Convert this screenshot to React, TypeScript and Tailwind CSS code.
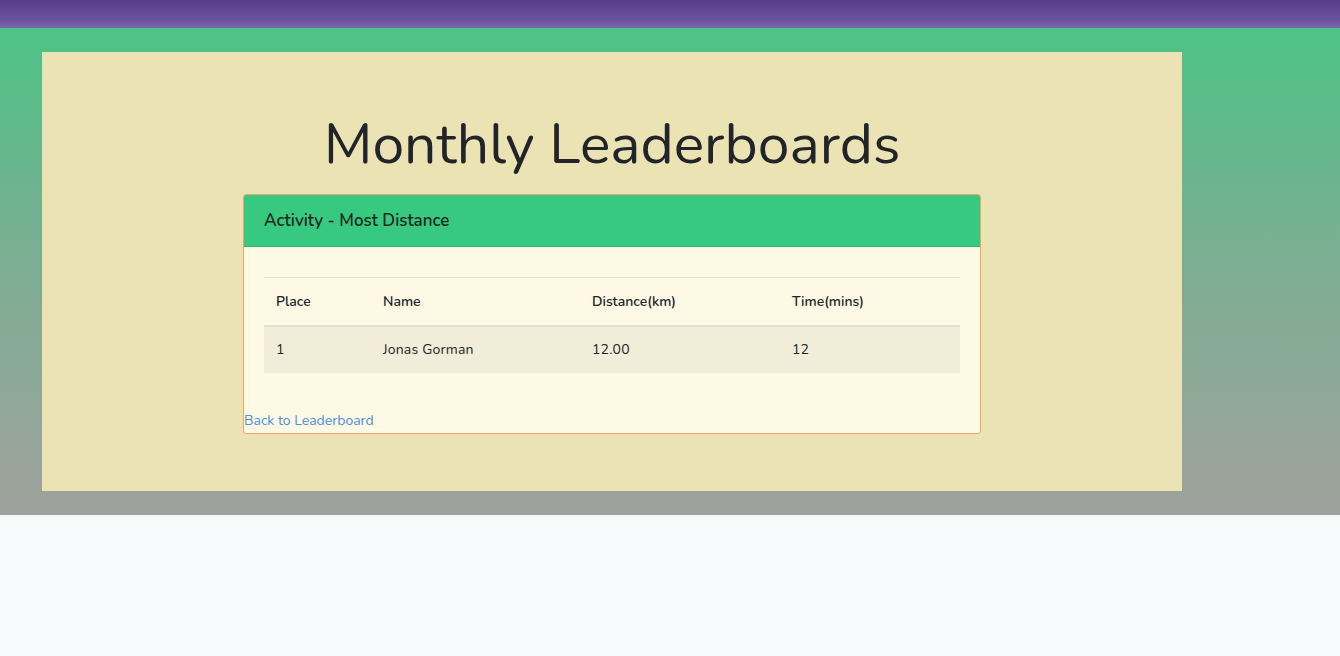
import React from "react";

const rows = [{ place: "1", name: "Jonas Gorman", distance: "12.00", time: "12" }];

export default function App() {
  return (
    <div className="min-h-[656px] bg-[#f8f9fa] font-['Nunito','Lato','Open_Sans',sans-serif] text-[#212529]">
      <nav className="h-[28px] bg-[linear-gradient(180deg,#553e86_0%,#6a52a0_70%,#7d63ad_100%)]" />

      <section className="bg-[linear-gradient(180deg,#4cc286_0%,#7aaf92_45%,#a0a19c_100%)] px-[42px] pb-[24px] pt-[24px]">
        <div className="w-[1140px] bg-[#ece3b5] pb-[57px] pt-[58px]">
          <h1 className="text-center text-[57px] font-normal leading-[68px] text-[#212529]">Monthly Leaderboards</h1>

          <div className="mx-auto mt-[16px] w-[738px] overflow-hidden rounded-[3px] border border-[#f0a46a] bg-[#fef9e4]">
            <div className="border-b border-[#2fb872] bg-[#36c97f] px-[20px] py-[14px] text-[17px] font-semibold leading-[23px] text-[#1d2a22]">
              Activity - Most Distance
            </div>
            <div className="px-[20px] pt-[30px]">
              <table className="w-full border-collapse text-[14px]">
                <thead>
                  <tr className="border-t border-[#e2dfd0] border-b-2 border-b-[#e2dfd0]">
                    <th className="w-[107px] px-[12px] pb-[11px] pt-[12px] text-left font-semibold leading-[24px]">Place</th>
                    <th className="w-[209px] px-[12px] pb-[11px] pt-[12px] text-left font-semibold leading-[24px]">Name</th>
                    <th className="w-[200px] px-[12px] pb-[11px] pt-[12px] text-left font-semibold leading-[24px]">Distance(km)</th>
                    <th className="px-[12px] pb-[11px] pt-[12px] text-left font-semibold leading-[24px]">Time(mins)</th>
                  </tr>
                </thead>
                <tbody>
                  {rows.map((r) => (
                    <tr key={r.place} className="bg-[#f2edd8]">
                      <td className="px-[12px] py-[11px] leading-[24px] tracking-[0.2px]">{r.place}</td>
                      <td className="px-[12px] py-[11px] leading-[24px] tracking-[0.2px]">{r.name}</td>
                      <td className="px-[12px] py-[11px] leading-[24px] tracking-[0.2px]">{r.distance}</td>
                      <td className="px-[12px] py-[11px] leading-[24px] tracking-[0.2px]">{r.time}</td>
                    </tr>
                  ))}
                </tbody>
              </table>
            </div>
            <a href="#" className="mt-[38px] block pb-[2px] text-[14px] leading-[20px] text-[#4a8fd8]">
              Back to Leaderboard
            </a>
          </div>
        </div>
      </section>
    </div>
  );
}
